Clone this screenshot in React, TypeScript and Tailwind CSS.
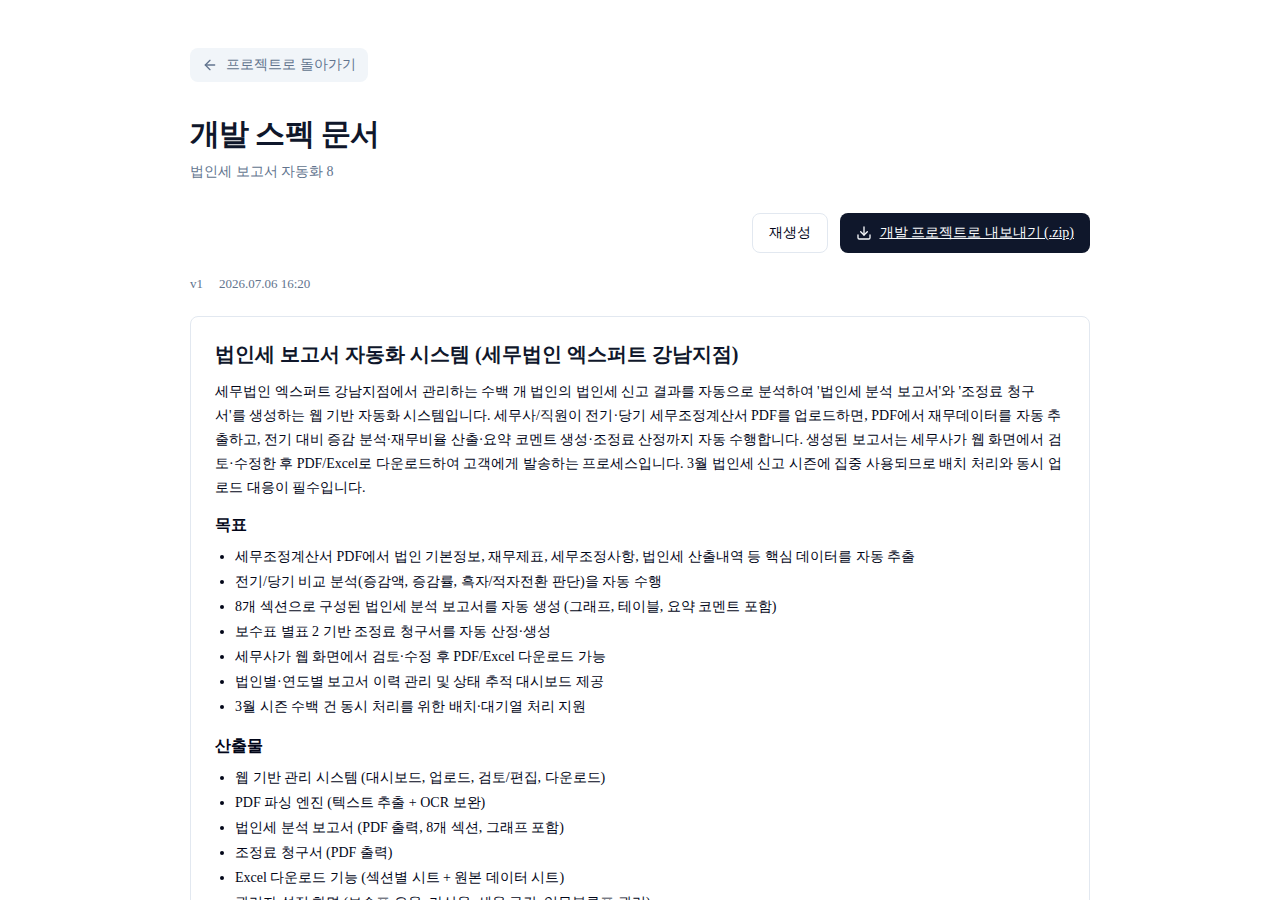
import { ArrowLeft, Download } from 'lucide-react';

const spec = {
  project: '법인세 보고서 자동화 8',
  version: 'v1',
  createdAt: '2026.07.06 16:20',
  title: '법인세 보고서 자동화 시스템 (세무법인 엑스퍼트 강남지점)',
  summary:
    "세무법인 엑스퍼트 강남지점에서 관리하는 수백 개 법인의 법인세 신고 결과를 자동으로 분석하여 '법인세 분석 보고서'와 '조정료 청구서'를 생성하는 웹 기반 자동화 시스템입니다. 세무사/직원이 전기·당기 세무조정계산서 PDF를 업로드하면, PDF에서 재무데이터를 자동 추출하고, 전기 대비 증감 분석·재무비율 산출·요약 코멘트 생성·조정료 산정까지 자동 수행합니다. 생성된 보고서는 세무사가 웹 화면에서 검토·수정한 후 PDF/Excel로 다운로드하여 고객에게 발송하는 프로세스입니다. 3월 법인세 신고 시즌에 집중 사용되므로 배치 처리와 동시 업로드 대응이 필수입니다.",
  sections: [
    {
      heading: '목표',
      items: [
        '세무조정계산서 PDF에서 법인 기본정보, 재무제표, 세무조정사항, 법인세 산출내역 등 핵심 데이터를 자동 추출',
        '전기/당기 비교 분석(증감액, 증감률, 흑자/적자전환 판단)을 자동 수행',
        '8개 섹션으로 구성된 법인세 분석 보고서를 자동 생성 (그래프, 테이블, 요약 코멘트 포함)',
        '보수표 별표 2 기반 조정료 청구서를 자동 산정·생성',
        '세무사가 웹 화면에서 검토·수정 후 PDF/Excel 다운로드 가능',
        '법인별·연도별 보고서 이력 관리 및 상태 추적 대시보드 제공',
        '3월 시즌 수백 건 동시 처리를 위한 배치·대기열 처리 지원',
      ],
    },
    {
      heading: '산출물',
      items: [
        '웹 기반 관리 시스템 (대시보드, 업로드, 검토/편집, 다운로드)',
        'PDF 파싱 엔진 (텍스트 추출 + OCR 보완)',
        '법인세 분석 보고서 (PDF 출력, 8개 섹션, 그래프 포함)',
        '조정료 청구서 (PDF 출력)',
        'Excel 다운로드 기능 (섹션별 시트 + 원본 데이터 시트)',
        '관리자 설정 화면 (보수표 요율, 가산율, 세율 구간, 업무분류표 관리)',
      ],
    },
  ],
};

export default function SpecPage() {
  return (
    <div className="min-h-screen bg-white font-['Liberation_Serif',serif] text-sm text-slate-950">
      <main className="mx-auto max-w-[900px] py-12">
        <a
          href="#project"
          className="inline-flex items-center gap-2 rounded-lg bg-slate-100 px-3 py-[7px] text-slate-500 hover:bg-slate-200"
        >
          <ArrowLeft className="h-4 w-4" />
          프로젝트로 돌아가기
        </a>

        <header className="mt-8">
          <h1 className="text-3xl leading-10 font-bold tracking-tight text-slate-900">개발 스펙 문서</h1>
          <p className="mt-2 text-slate-500">{spec.project}</p>
        </header>

        <div className="mt-[31px] flex items-center justify-end gap-3">
          <button type="button" className="h-10 rounded-lg border border-slate-200 bg-white px-4 hover:bg-slate-50">
            재생성
          </button>
          <a
            href="#export"
            className="inline-flex h-10 items-center gap-2 rounded-lg bg-slate-900 px-4 text-slate-50 underline"
          >
            <Download className="h-4 w-4" />
            개발 프로젝트로 내보내기 (.zip)
          </a>
        </div>

        <div className="mt-[21px] flex gap-4 text-[13px] leading-5 text-slate-500">
          <span>{spec.version}</span>
          <span>{spec.createdAt}</span>
        </div>

        <article className="mt-[22px] rounded-lg border border-slate-200 p-6">
          <h2 className="text-xl leading-[26px] font-bold text-slate-900">{spec.title}</h2>
          <p className="mt-[13px] leading-6">{spec.summary}</p>

          {spec.sections.map((section) => (
            <section key={section.heading} className="mt-3.5">
              <h3 className="text-base leading-[22px] font-bold">{section.heading}</h3>
              <ul className="mt-2 list-disc pb-0.5 pl-5 leading-[25px]">
                {section.items.map((item) => (
                  <li key={item}>{item}</li>
                ))}
              </ul>
            </section>
          ))}
        </article>
      </main>
    </div>
  );
}
